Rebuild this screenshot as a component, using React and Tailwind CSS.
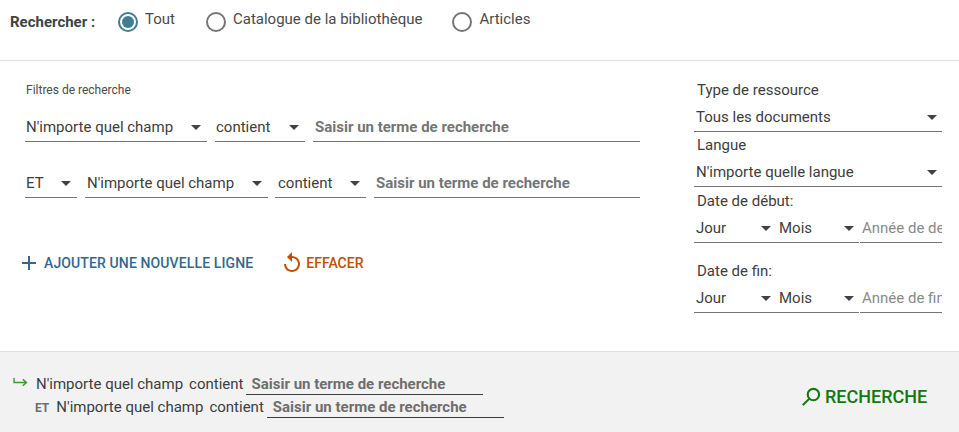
import React from 'react';

const Caret = ({ className = '' }) => (
    <span className={`w-0 h-0 border-x-[5px] border-x-transparent border-t-[5px] border-t-[#424242] ${className}`} />
);

const Select = ({ label, className = '' }) => (
    <div className={`h-[28px] flex items-center justify-between border-b border-[#757575] pl-[1px] pr-[6px] text-[15px] text-[#3d3d3d] ${className}`}>
        <span className="whitespace-nowrap">{label}</span>
        <Caret />
    </div>
);

const Radio = ({ label, checked, className = '' }) => (
    <div className={`flex items-center ${className}`}>
        <span className={`w-[20px] h-[20px] mt-[3px] rounded-full border-2 flex items-center justify-center ${checked ? 'border-[#3f7d92]' : 'border-[#757575]'}`}>
            {checked && <span className="w-[12px] h-[12px] rounded-full bg-[#3f7d92]" />}
        </span>
        <span className="ml-[7px] -mt-[3px] text-[15px] text-[#4a4a4a]">{label}</span>
    </div>
);

const TermInput = ({ className = '' }) => (
    <div className={`h-[28px] flex items-center border-b border-[#757575] pl-[2px] text-[15px] font-bold text-[#757575] whitespace-nowrap ${className}`}>
        Saisir un terme de recherche
    </div>
);

const DateRow = ({ placeholder }) => (
    <div className="flex">
        <Select label="Jour" className="w-[83px] !pl-[2px] !pr-[6px]" />
        <Select label="Mois" className="w-[82px] !pl-[2px] !pr-[5px]" />
        <div className="ml-[1px] w-[82px] h-[28px] flex items-center border-b border-[#757575] pl-[2px] text-[15px] text-[#8a8a8a] overflow-hidden whitespace-nowrap">
            {placeholder}
        </div>
    </div>
);

const SummaryRow = ({ prefix, termClass }) => (
    <div className="flex items-center h-[23px] text-[15px] text-[#3d3d3d] whitespace-nowrap">
        {prefix}
        <span>N'importe quel champ</span>
        <span className="ml-[6px]">contient</span>
        <span className={`w-[237px] h-[21px] border-b border-[#3d3d3d] pl-[6px] text-[15px] font-bold text-[#6e6e6e] leading-[20px] ${termClass}`}>
            Saisir un terme de recherche
        </span>
    </div>
);

export default function App() {
    return (
        <div className="w-[959px] h-[432px] flex flex-col bg-white overflow-hidden font-['Roboto',sans-serif]">
            {/* Scope */}
            <div className="h-[61px] shrink-0 border-b border-[#e0e0e0] flex items-start pt-[9px] pl-[10px]">
                <span className="mt-[2px] text-[15px] font-bold text-[#424242] w-[108px] leading-[20px] pt-[1px] whitespace-nowrap">Rechercher :</span>
                <Radio label="Tout" checked />
                <Radio label="Catalogue de la bibliothèque" className="ml-[31px]" />
                <Radio label="Articles" className="ml-[30px]" />
            </div>

            {/* Filters */}
            <div className="flex-1 flex">
                <div className="w-[694px] shrink-0 pl-[25px] pt-[22px]">
                    <div className="pl-[1px] text-[12px] leading-[14px] text-[#4a4a4a]">Filtres de recherche</div>
                    <div className="mt-[17px] flex">
                        <Select label="N'importe quel champ" className="w-[182px]" />
                        <Select label="contient" className="w-[90px] ml-[8px]" />
                        <TermInput className="w-[327px] ml-[8px]" />
                    </div>
                    <div className="mt-[28px] flex">
                        <Select label="ET" className="w-[52px]" />
                        <Select label="N'importe quel champ" className="w-[183px] ml-[8px] !pl-[2px]" />
                        <Select label="contient" className="w-[91px] ml-[7px] !pl-[3px]" />
                        <TermInput className="w-[266px] ml-[8px]" />
                    </div>
                    <div className="mt-[51px] flex items-center text-[14px] font-medium h-[28px]">
                        <svg viewBox="0 0 16 16" className="w-[16px] h-[16px] -ml-[4px]" fill="none" stroke="#34678f" strokeWidth="2">
                            <path d="M8 1v14M1 8h14" />
                        </svg>
                        <span className="ml-[7px] tracking-[0.12px] text-[#34678f]">AJOUTER UNE NOUVELLE LIGNE</span>
                        <svg viewBox="0 0 24 24" className="ml-[27px] w-[24px] h-[24px] -mt-[1px]" fill="#c24e00">
                            <path d="M12 5V1L7 6l5 5V7c3.31 0 6 2.69 6 6s-2.69 6-6 6-6-2.69-6-6H4c0 4.42 3.58 8 8 8s8-3.58 8-8-3.58-8-8-8z" />
                        </svg>
                        <span className="ml-[2px] text-[#c24e00]">EFFACER</span>
                    </div>
                </div>

                <div className="w-[248px] shrink-0 pt-[19px] text-[15px] text-[#3d3d3d]">
                    <div className="pl-[3px] h-[20px] leading-[20px]">Type de ressource</div>
                    <Select label="Tous les documents" className="!pl-[2px] !pr-[5px] mt-[4px]" />
                    <div className="pl-[3px] h-[27px] leading-[27px]">Langue</div>
                    <Select label="N'importe quelle langue" className="!pl-[2px] !pr-[5px]" />
                    <div className="pl-[3px] h-[28px] leading-[28px]">Date de début:</div>
                    <DateRow placeholder="Année de debut" />
                    <div className="mt-[14px] pl-[3px] h-[28px] leading-[28px]">Date de fin:</div>
                    <DateRow placeholder="Année de fin" />
                </div>
            </div>

            {/* Summary */}
            <div className="h-[81px] shrink-0 bg-[#f2f2f2] border-t border-[#e0e0e0] flex items-start pl-[13px] pt-[21px]">
                <div className="w-[789px] shrink-0">
                    <SummaryRow
                        termClass="ml-[2px]"
                        prefix={
                            <svg viewBox="0 0 16 12" className="w-[15px] h-[11px] mr-[8px] -mt-[4px]" fill="none" stroke="#3a9a35" strokeWidth="1.6">
                                <path d="M1 1v5h13M10.5 2.5 14.5 6l-4 3.5" />
                            </svg>
                        }
                    />
                    <SummaryRow
                        termClass="ml-[3px]"
                        prefix={<span className="ml-[22px] mr-[7px] text-[12px] font-bold text-[#6e6e6e]">ET</span>}
                    />
                </div>
                <div className="mt-[10px] flex items-center text-[18px] font-medium text-[#107a0c]">
                    <svg viewBox="0 0 20 20" className="w-[19px] h-[19px]" fill="none" stroke="#107a0c" strokeWidth="2.2">
                        <circle cx="12" cy="8" r="6" />
                        <path d="M7.5 12.5 1.5 18.5" strokeLinecap="round" />
                    </svg>
                    <span className="ml-[4px]">RECHERCHE</span>
                </div>
            </div>
        </div>
    );
}
